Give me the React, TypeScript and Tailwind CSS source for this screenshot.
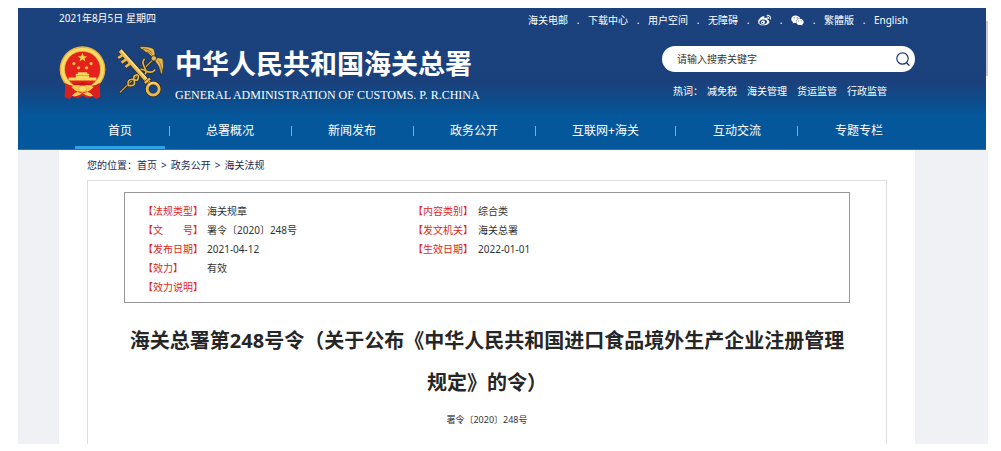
import { Fragment } from 'react';
import { FaWeibo, FaWeixin } from 'react-icons/fa';

const topLinks = [
    { label: '海关电邮' },
    { label: '下载中心' },
    { label: '用户空间' },
    { label: '无障碍' },
    { label: '微博', icon: FaWeibo },
    { label: '微信', icon: FaWeixin },
    { label: '繁體版' },
    { label: 'English' },
];

const hotWords = ['减免税', '海关管理', '货运监管', '行政监管'];

const navItems = ['首页', '总署概况', '新闻发布', '政务公开', '互联网+海关', '互动交流', '专题专栏'];

const crumbs = ['首页', '政务公开', '海关法规'];

const infoRows = [
    ['【法规类型】', '海关规章', '【内容类别】', '综合类'],
    ['【文　　号】', '署令〔2020〕248号', '【发文机关】', '海关总署'],
    ['【发布日期】', '2021-04-12', '【生效日期】', '2022-01-01'],
    ['【效力】', '有效'],
    ['【效力说明】', ''],
];

function Emblem() {
    return (
        <svg viewBox="0 0 140 160" className="w-[47px] h-[53px] shrink-0" aria-hidden="true">
            <circle cx="70" cy="70" r="69" fill="#e9b23a" />
            <circle cx="70" cy="70" r="65" fill="#f9d968" />
            <circle cx="70" cy="70" r="55" fill="#e8a92c" />
            <circle cx="70" cy="70" r="53" fill="#e5201d" />
            <path d="M70 20 L74 31 L84 31 L76 38 L79 47 L70 41 L61 47 L64 38 L56 31 L66 31 Z" fill="#f9d34e" />
            <g fill="#f5c142">
                <circle cx="44" cy="53" r="5" />
                <circle cx="96" cy="53" r="5" />
                <circle cx="58" cy="66" r="5" />
                <circle cx="82" cy="66" r="5" />
            </g>
            <path d="M56 79 H84 V84 H90 V95 H112 V104 H28 V95 H50 V84 H56 Z" fill="#fbd95f" />
            <path d="M50 89 H90" stroke="#d98b22" strokeWidth="2" />
            {/* ribbon */}
            <path d="M18 112 Q40 126 56 116 Q70 106 84 116 Q100 126 122 112 L124 154 L110 160 L100 152 L86 158 L70 150 L54 158 L40 152 L30 160 L16 154 Z" fill="#dc1f1e" />
            <path d="M30 108 Q50 122 70 108 Q90 122 110 108 L96 118 H44 Z" fill="#c91719" />
            <path d="M36 124 Q54 112 70 122 Q86 112 104 124 Q94 136 84 138 Q94 140 102 150 Q84 156 70 142 Q56 156 38 150 Q46 140 56 138 Q46 136 36 124 Z" fill="#f5cb50" />
            <ellipse cx="70" cy="129" rx="12" ry="9" fill="#fadb6a" stroke="#e0a030" strokeWidth="2" />
            <path d="M56 138 Q70 146 84 138" fill="none" stroke="#d9401f" strokeWidth="3" />
        </svg>
    );
}

function CustomsBadge() {
    return (
        <svg viewBox="0 0 146 156" className="w-[49px] h-[52px] shrink-0" aria-hidden="true">
            <g fill="none" strokeLinecap="round" strokeLinejoin="round">
                {/* caduceus */}
                <path d="M12 139 L112 40" stroke="#2a2210" strokeWidth="8" />
                <path d="M12 139 L112 40" stroke="#c99a3a" strokeWidth="4" />
                <path d="M36 118 Q32 98 52 100 Q70 110 66 84 Q68 62 88 74 Q106 84 116 72 M36 118 Q60 122 54 104 Q48 84 70 86 Q98 90 86 66 Q76 48 84 40" stroke="#2a2210" strokeWidth="8" />
                <path d="M36 118 Q32 98 52 100 Q70 110 66 84 Q68 62 88 74 Q106 84 116 72 M36 118 Q60 122 54 104 Q48 84 70 86 Q98 90 86 66 Q76 48 84 40" stroke="#e2b450" strokeWidth="5" />
            </g>
            {/* wings */}
            <g fill="#e3b856" stroke="#2a2210" strokeWidth="2">
                <path d="M70 2 Q98 0 112 8 Q120 20 114 40 Q108 32 102 28 Q96 20 88 18 Q82 10 74 9 Z" />
                <path d="M112 38 Q128 32 140 38 Q146 60 136 88 Q132 80 130 70 Q128 60 124 56 Q118 48 112 38 Z" />
                <circle cx="113" cy="37" r="8" />
            </g>
            <path d="M80 7 Q98 8 108 20 M92 16 Q104 20 110 30 M134 76 Q138 56 126 44" stroke="#7d5717" strokeWidth="2" fill="none" />
            {/* key */}
            <g fill="none" strokeLinejoin="round">
                <path d="M12 14 L100 112" stroke="#2a2210" strokeWidth="16" />
                <path d="M18 28 L6 36 M30 40 L16 50 M42 52 L28 63" stroke="#2a2210" strokeWidth="11" />
                <path d="M18 28 L6 36 M30 40 L16 50 M42 52 L28 63" stroke="#e9b84e" strokeWidth="8" />
                <path d="M12 14 L100 112" stroke="#e9b84e" strokeWidth="12" />
                <path d="M14 12 L100 108" stroke="#f9e29a" strokeWidth="4" />
                <circle cx="111" cy="129" r="18" stroke="#2a2210" strokeWidth="12" />
                <circle cx="111" cy="129" r="18" stroke="#e9b84e" strokeWidth="9" />
                <path d="M97 117 Q109 106 124 115" stroke="#f9e29a" strokeWidth="3" />
                <path d="M85 112 L103 96" stroke="#2a2210" strokeWidth="10" />
                <path d="M86 111 L102 97" stroke="#e9b84e" strokeWidth="7" />
            </g>
        </svg>
    );
}

function SearchIcon() {
    return (
        <svg viewBox="0 0 14 14" className="w-[14px] h-[14px]" fill="none" stroke="#1e3f7c" strokeLinecap="round" aria-hidden="true">
            <circle cx="6.5" cy="6.5" r="5.7" strokeWidth="1.2" />
            <path d="M10.6 10.8 L13 13.2" strokeWidth="1.4" />
        </svg>
    );
}

function Header() {
    return (
        <header className="mr-0.5 border-b border-[#5c6199] bg-[#05579b] bg-[linear-gradient(to_bottom,#1c427d_0px,#1b417c_74px,#0c4d8d_94px,#05579b_108px)] text-white">
            <div className="ml-[41px] mr-[71px]">
                <div className="flex h-6 items-center justify-between pr-[7px] text-[10px] whitespace-nowrap">
                    <time dateTime="2021-08-05" className="pb-1">2021年8月5日 星期四</time>
                    <ul className="flex items-center gap-2">
                        {topLinks.map((link, i) => (
                            <Fragment key={link.label}>
                                {i > 0 && <li className="w-1 text-center" aria-hidden="true">.</li>}
                                <li>
                                    <a href="#" aria-label={link.label}>
                                        {link.icon ? <link.icon className="h-[13px] w-[13px]" /> : link.label}
                                    </a>
                                </li>
                            </Fragment>
                        ))}
                    </ul>
                </div>

                <div className="flex h-20 justify-between">
                    <div className="flex items-start gap-[10px] pt-[14px]">
                        <Emblem />
                        <CustomsBadge />
                        <div className="whitespace-nowrap">
                            <h1 className="text-[27px] leading-[36px] font-bold">中华人民共和国海关总署</h1>
                            <p className="font-['Liberation_Serif',serif] text-[12px] leading-[26px]">
                                GENERAL ADMINISTRATION OF CUSTOMS. P. R.CHINA
                            </p>
                        </div>
                    </div>

                    <div className="w-[253px] shrink-0 pt-[14px] text-[10px]">
                        <form className="flex h-[26px] items-center rounded-full bg-white pr-[5px] pl-[15px]">
                            <input
                                type="text"
                                aria-label="搜索关键字"
                                placeholder="请输入搜索关键字"
                                className="min-w-0 flex-1 text-[#333] outline-none placeholder:text-[#333]"
                            />
                            <button type="button" aria-label="搜索">
                                <SearchIcon />
                            </button>
                        </form>
                        <div className="mt-[11px] flex pl-[11px] leading-4 whitespace-nowrap">
                            <span className="w-[34px]">热词：</span>
                            <div className="flex gap-[10px]">
                                {hotWords.map((word) => (
                                    <a key={word} href="#">{word}</a>
                                ))}
                            </div>
                        </div>
                    </div>
                </div>

                <nav className="flex pl-4 text-xs whitespace-nowrap">
                    {navItems.map((item, i) => (
                        <Fragment key={item}>
                            {i > 0 && (
                                <span className="flex h-[37px] w-2 shrink-0 items-center justify-center" aria-hidden="true">
                                    <span className="h-[10px] w-px bg-[#8aa6cf]" />
                                </span>
                            )}
                            <a
                                href="#"
                                className={
                                    i === 0
                                        ? 'flex h-[37px] shrink-0 items-center border-b-3 border-[#2ea3e3] px-[33px] pt-[4px]'
                                        : 'flex h-[37px] shrink-0 items-center px-[33px] pt-px'
                                }
                            >
                                {item}
                            </a>
                        </Fragment>
                    ))}
                </nav>
            </div>
        </header>
    );
}

function InfoTable() {
    return (
        <div className="border border-[#979797] pt-[9px] pb-[5px] pl-[18px]">
            <table className="w-full table-fixed text-left text-[10px] leading-[19px] text-[#333]">
                <colgroup>
                    <col className="w-16" />
                    <col className="w-[206px]" />
                    <col className="w-[65px]" />
                    <col />
                </colgroup>
                <tbody>
                    {infoRows.map(([label, value, label2, value2]) => (
                        <tr key={label}>
                            <th scope="row" className="p-0 font-normal whitespace-nowrap text-[#e0261c]">{label}</th>
                            <td className="p-0" colSpan={label2 ? 1 : 3}>{value}</td>
                            {label2 && <th scope="row" className="p-0 font-normal whitespace-nowrap text-[#e0261c]">{label2}</th>}
                            {label2 && <td className="p-0">{value2}</td>}
                        </tr>
                    ))}
                </tbody>
            </table>
        </div>
    );
}

export default function App() {
    return (
        <div className="bg-white pt-2 pr-[13px] pb-2 pl-[18px] font-['Noto_Sans','Noto_Sans_CJK_SC',sans-serif]">
            <div className="relative">
                <div className="absolute top-[13px] right-0 h-[55px] w-0.5 bg-[#c9c9c9]" />
                <Header />
            </div>

            <div className="bg-[#f0f1f4] pr-[73px] pl-[41px]">
                <main className="bg-white px-7">
                    <nav className="flex h-[30px] items-center text-[10px] text-[#1b2a55]">
                        <span>您的位置：</span>
                        <ol className="flex gap-1">
                            {crumbs.map((crumb, i) => (
                                <Fragment key={crumb}>
                                    {i > 0 && <li aria-hidden="true">&gt;</li>}
                                    <li><a href="#">{crumb}</a></li>
                                </Fragment>
                            ))}
                        </ol>
                    </nav>

                    <article className="border border-b-0 border-[#dedede] px-9 pt-[11px] pb-4">
                        <InfoTable />
                        <h2 className="mt-[17px] text-center text-xl leading-[42px] font-bold text-[#262626]">
                            海关总署第248号令（关于公布《中华人民共和国进口食品境外生产企业注册管理规定》的令）
                        </h2>
                        <p className="mt-2 text-center text-[9px] leading-4 text-[#333]">署令〔2020〕248号</p>
                    </article>
                </main>
            </div>
        </div>
    );
}
